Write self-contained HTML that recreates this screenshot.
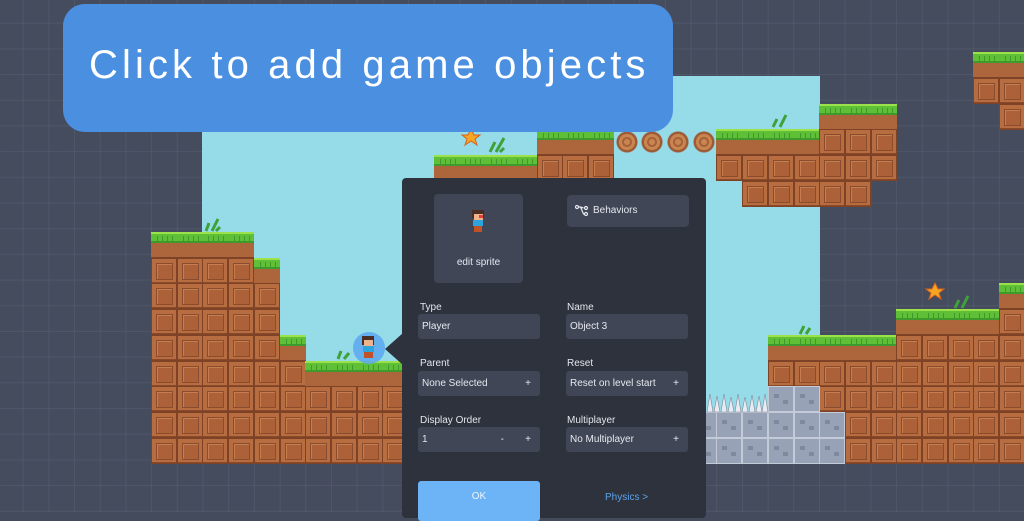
<!DOCTYPE html>
<html><head><meta charset="utf-8"><style>
*{margin:0;padding:0;box-sizing:border-box}
body{width:1024px;height:512px;overflow:hidden;position:relative;background:#444b5d;font-family:"Liberation Sans",sans-serif}
#bg{position:absolute;inset:0;background-color:#454c5e;
background-image:linear-gradient(90deg,rgba(90,98,118,.45) 1px,transparent 1px),linear-gradient(0deg,rgba(90,98,118,.45) 1px,transparent 1px);
background-size:25.7px 25.7px;background-position:-3px -2px}
#sky{position:absolute;left:202px;top:76px;width:618px;height:387px;background:#95dbe8}
.t{position:absolute;width:26px;height:26px}
.d{background:#b86d41;box-shadow:inset 0 0 0 1px #7e4327,inset 0 -2px 0 #8a4a2a}
.d::after{content:"";position:absolute;left:5px;top:5px;width:15px;height:15px;border:1px solid #8a4c2d;background:#ad6139;box-shadow:inset 1px 1px 0 #c47e4f}
.g{background:linear-gradient(#9be24a 0,#9be24a 2px,#5fbf36 2px,#5fbf36 9px,#3e9a2c 9px,#3e9a2c 11px,#ad663c 11px);box-shadow:inset 0 -1px 0 #7e4327}
.g::after{content:"";position:absolute;left:2px;top:4px;width:22px;height:7px;background:repeating-linear-gradient(90deg,transparent 0,transparent 4px,#3e9a2c 4px,#3e9a2c 5px)}
.s{background:#98a2b6;box-shadow:inset 0 0 0 1px #c3cad8}
.s::after{content:"";position:absolute;left:6px;top:8px;width:5px;height:4px;background:#7f899d;box-shadow:9px 6px 0 #7f899d}
.l{background:radial-gradient(circle,#c98550 0 3px,#a6603a 3px 5px,#c98550 5px 8px,#9d5a35 8px 10px,transparent 11px)}
#banner{position:absolute;left:63px;top:4px;width:610px;height:128px;background:#4a8fe0;border-radius:22px;color:#fff;font-size:40px;letter-spacing:4.1px;padding:39px 0 0 26px;white-space:nowrap}
#panel{position:absolute;left:402px;top:178px;width:304px;height:340px;background:#2d323d;border-radius:4px}
#arrow{position:absolute;left:385px;top:333px;width:0;height:0;border-top:16px solid transparent;border-bottom:16px solid transparent;border-right:18px solid #2d323d}
.box{position:absolute;background:#404656;border-radius:4px;color:#e6e8ee;font-size:10px}
.lab{position:absolute;color:#e3e6ec;font-size:10px}
.in{position:absolute;background:#404656;border-radius:3px;color:#e6e8ee;font-size:10px;height:25px;width:122px;line-height:25px;padding-left:4px}
.in b{position:absolute;font-weight:normal;right:9px}
</style></head><body>
<div id="bg"></div>
<div id="sky"></div>
<div id="tiles"></div>
<script>
var T=25.7,X0=151,Y0=232,h='';
function t(c,r,k){h+='<div class="t '+k+'" style="left:'+(X0+c*T).toFixed(1)+'px;top:'+(Y0+r*T).toFixed(1)+'px"></div>';}
function col(c,gr,bot){t(c,gr,'g');for(var r=gr+1;r<=bot;r++)t(c,r,'d');}
for(var c=0;c<4;c++)col(c,0,8);
col(4,1,8);col(5,4,8);for(c=6;c<10;c++)col(c,5,8);
for(c=11;c<15;c++)t(c,-3,'g');
for(c=15;c<18;c++){t(c,-4,'g');t(c,-3,'d');}
for(c=18;c<22;c++)t(c,-4,'l');
for(c=22;c<26;c++){t(c,-4,'g');t(c,-3,'d');}
for(c=26;c<29;c++){t(c,-5,'g');t(c,-4,'d');t(c,-3,'d');}
for(c=23;c<28;c++)t(c,-2,'d');
t(32,-7,'g');t(33,-7,'g');t(32,-6,'d');t(33,-6,'d');t(33,-5,'d');
for(c=24;c<29;c++)col(c,4,8);
for(c=29;c<33;c++)col(c,3,8);
col(33,2,8);
t(24,6,'s');t(25,6,'s');t(24,7,'s');t(25,7,'s');t(24,8,'s');t(25,8,'s');t(26,7,'s');t(26,8,'s');
for(c=21;c<24;c++){t(c,7,'s');t(c,8,'s');}
document.getElementById('tiles').innerHTML=h;
</script>
<svg style="position:absolute;left:0;top:0" width="1024" height="512">
<g fill="#e8ecf2" stroke="#7d8597" stroke-width=".6">
<polygon points="707,412 710,394 713,412"/><polygon points="714,412 717,396 720,412"/><polygon points="721,412 724,394 727,412"/><polygon points="728,412 731,397 734,412"/><polygon points="735,412 738,394 741,412"/><polygon points="742,412 745,397 748,412"/><polygon points="749,412 752,395 755,412"/><polygon points="756,412 759,396 762,412"/><polygon points="762,412 765,394 768,412"/>
</g>
<g fill="#f6a623" stroke="#d9621b" stroke-width="1"><polygon points="471,129 474,135 480,135 475,139 477,145 471,141 465,145 467,139 462,135 468,135"/><polygon points="935,283 938,289 944,289 939,293 941,299 935,295 929,299 931,293 926,289 932,289"/></g>
<g stroke="#3ea238" stroke-width="3" fill="none"><path d="M490 152 l5 -10 M496 152 l8 -14 M500 152 l4 -4"/><path d="M206 231 l3 -8 M212 231 l6 -12 M216 231 l4 -4"/><path d="M338 359 l3 -8 M344 359 l5 -6"/><path d="M773 127 l4 -8 M780 127 l6 -12"/><path d="M800 334 l4 -8 M806 334 l4 -6"/><path d="M955 308 l4 -8 M962 308 l6 -12"/></g>
<circle cx="369" cy="348" r="16" fill="#5aa7f0" opacity=".85"/>
<rect x="362" y="336" width="12" height="9" fill="#4a2e24"/><rect x="364" y="340" width="9" height="6" fill="#f0b48c"/><rect x="363" y="346" width="11" height="6" fill="#2ea4dd"/><rect x="364" y="352" width="9" height="6" fill="#c0522a"/>
</svg>
<div id="banner">Click to add game objects</div>
<div id="arrow"></div>
<div id="panel">
<div class="box" style="left:32px;top:16px;width:89px;height:89px"><svg style="position:absolute;left:35px;top:16px" width="18" height="24"><rect x="3" y="0" width="12" height="8" fill="#4a2e24"/><rect x="5" y="4" width="9" height="6" fill="#f0b48c"/><rect x="10" y="5" width="4" height="3" fill="#e0403a"/><rect x="4" y="10" width="10" height="6" fill="#2ea4dd"/><rect x="5" y="16" width="8" height="6" fill="#c0522a"/></svg><div style="position:absolute;top:63px;width:100%;text-align:center">edit sprite</div></div>
<div class="box" style="left:165px;top:17px;width:122px;height:32px;line-height:32px;padding-left:26px">Behaviors<svg style="position:absolute;left:8px;top:10px" width="14" height="11" fill="none" stroke="#e6e8ee" stroke-width="1.2"><circle cx="2" cy="2" r="1.5"/><circle cx="11" cy="3" r="1.5"/><circle cx="11" cy="9" r="1.5"/><path d="M3.5 2h2l3 1M5.5 2l3 7h1"/></svg></div>
<div class="lab" style="left:18px;top:124px">Type</div><div class="in" style="left:16px;top:136px">Player</div>
<div class="lab" style="left:165px;top:124px">Name</div><div class="in" style="left:164px;top:136px">Object 3</div>
<div class="lab" style="left:18px;top:180px">Parent</div><div class="in" style="left:16px;top:193px">None Selected<b>+</b></div>
<div class="lab" style="left:165px;top:180px">Reset</div><div class="in" style="left:164px;top:193px">Reset on level start<b>+</b></div>
<div class="lab" style="left:18px;top:237px">Display Order</div><div class="in" style="left:16px;top:249px">1<b style="right:36px">-</b><b>+</b></div>
<div class="lab" style="left:165px;top:237px">Multiplayer</div><div class="in" style="left:164px;top:249px">No Multiplayer<b>+</b></div>
<div style="position:absolute;left:16px;top:303px;width:122px;height:40px;background:#6cb4f6;border-radius:3px;color:#eaf4ff;font-size:10px;text-align:center;line-height:32px">OK</div>
<div style="position:absolute;left:203px;top:314px;color:#5ea2e8;font-size:10px">Physics &gt;</div>
</div>
</body></html>
